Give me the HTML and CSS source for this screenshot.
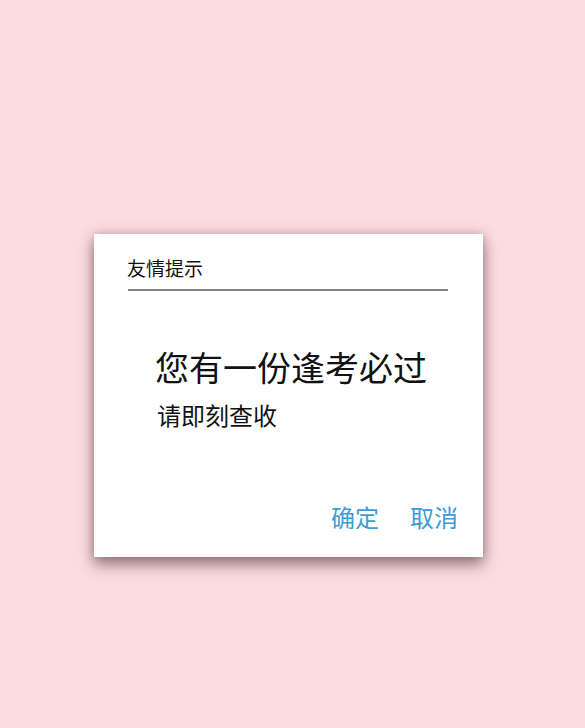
FILE: index.html
```html
<!DOCTYPE html>
<html lang="zh">
<head>
<meta charset="utf-8">
<link rel="stylesheet" href="styles.css">
</head>
<body>
<div class="dialog">
  <div class="title">友情提示</div>
  <div class="rule"></div>
  <div class="main">您有一份逢考必过</div>
  <div class="sub">请即刻查收</div>
  <div class="actions">
    <span class="btn">确定</span>
    <span class="btn">取消</span>
  </div>
</div>
</body>
</html>
```

FILE: styles.css
```css
html, body {
  margin: 0;
  padding: 0;
}
body {
  background: #fcdcdf;
  width: 585px;
  height: 728px;
  overflow: hidden;
  font-family: "Noto Sans CJK SC", "Noto Sans", sans-serif;
  color: #111;
}
.dialog {
  margin: 234px 0 0 94px;
  width: 389px;
  height: 323px;
  box-sizing: border-box;
  background: #fff;
  padding: 21.5px 0 0 0;
  box-shadow: 0 8px 14px rgba(80, 50, 55, 0.55), 0 0 10px rgba(120, 80, 85, 0.35);
  display: flex;
  flex-direction: column;
}
.title {
  font-size: 19px;
  line-height: 24px;
  padding-left: 33px;
}
.rule {
  margin: 9.5px 35px 0 34px;
  height: 2px;
  background: #838383;
}
.main {
  margin-top: 55.5px;
  padding-left: 61px;
  font-size: 34px;
  line-height: 40px;
}
.sub {
  margin-top: 13.5px;
  padding-left: 63px;
  font-size: 24px;
  line-height: 30px;
}
.actions {
  margin-top: 71.5px;
  display: flex;
  justify-content: flex-end;
  gap: 31px;
  padding-right: 25px;
}
.btn {
  font-size: 24px;
  line-height: 30px;
  color: #3d9bd6;
}
```
